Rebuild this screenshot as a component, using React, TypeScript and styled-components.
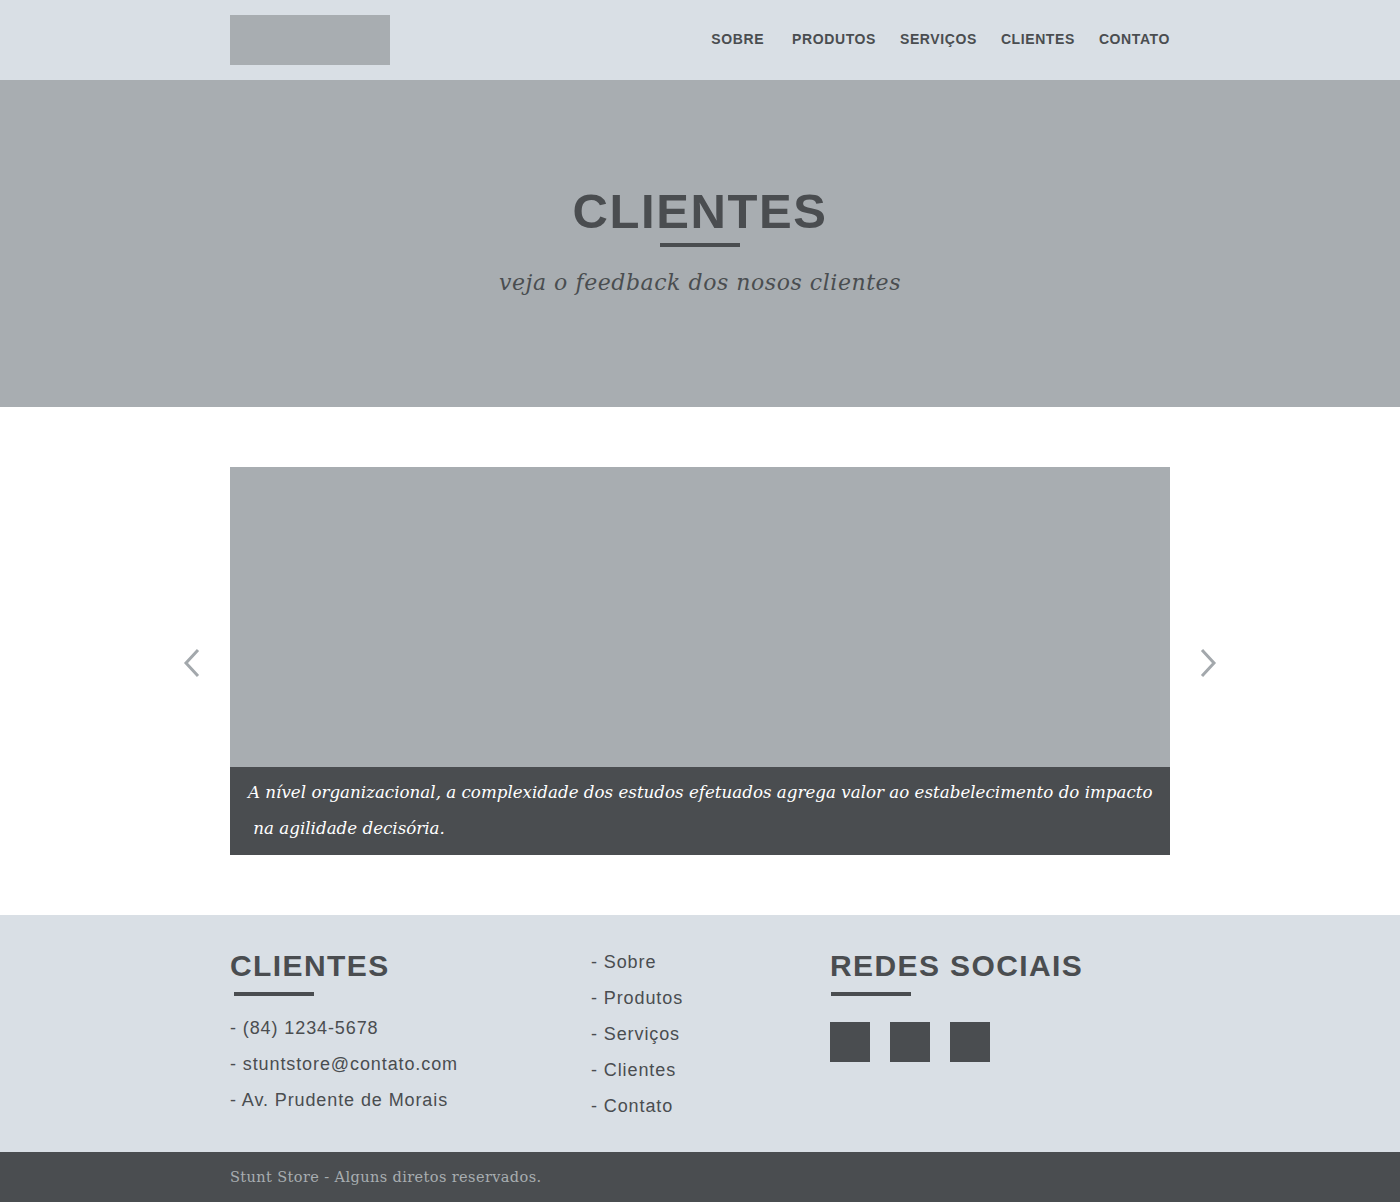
import React from "react";
import styled, { createGlobalStyle } from "styled-components";

const Global = createGlobalStyle`
  html, body { margin: 0; padding: 0; }
  body { background: #ffffff; font-family: "Liberation Sans", Arial, sans-serif; }
  * { box-sizing: border-box; }
`;

const DARK = "#4a4d50";
const GREY = "#a8adb1";
const LIGHT = "#d9dfe5";

const Header = styled.header`
  background: ${LIGHT};
  height: 80px;
`;

const Container = styled.div`
  width: 940px;
  margin: 0 auto;
`;

const HeaderInner = styled(Container)`
  height: 100%;
  display: flex;
  align-items: center;
  justify-content: space-between;
`;

const Logo = styled.div`
  width: 160px;
  height: 50px;
  background: ${GREY};
`;

const Nav = styled.nav`
  display: flex;
  gap: 24px;
  margin-top: -3px;
`;

const NavLink = styled.a<{ $extra?: number }>`
  font-family: "Liberation Sans", Arial, sans-serif;
  font-weight: bold;
  font-size: 14px;
  letter-spacing: 0.6px;
  color: ${DARK};
  text-decoration: none;
  margin-right: ${(p) => p.$extra ?? 0}px;
`;

const Hero = styled.section`
  background: ${GREY};
  height: 327px;
  display: flex;
  flex-direction: column;
  align-items: center;
  padding-top: 104px;
`;

const HeroTitle = styled.h1`
  margin: 0;
  font-family: "Liberation Sans", Arial, sans-serif;
  font-weight: bold;
  font-size: 49px;
  line-height: 54px;
  letter-spacing: 1.6px;
  color: ${DARK};
`;

const Bar = styled.div<{ $offset?: number }>`
  width: 80px;
  height: 4px;
  background: ${DARK};
  margin-left: ${(p) => p.$offset ?? 0}px;
`;

const HeroBar = styled(Bar)`
  margin-top: 5px;
`;

const HeroSub = styled.p`
  margin: 23px 0 0;
  font-family: "DejaVu Serif", Georgia, serif;
  font-style: italic;
  font-size: 22px;
  letter-spacing: 0.55px;
  color: ${DARK};
`;

const Main = styled.main`
  padding: 60px 0;
  display: flex;
  justify-content: center;
  align-items: center;
  gap: 28px;
`;

const ArrowButton = styled.button`
  width: 20px;
  height: 40px;
  padding: 0;
  border: 0;
  background: none;
  display: flex;
  align-items: center;
  justify-content: center;
  cursor: pointer;
  margin-top: 4px;
`;

const Slide = styled.div`
  width: 940px;
  display: flex;
  flex-direction: column;
`;

const SlideImage = styled.div`
  height: 300px;
  background: ${GREY};
`;

const Caption = styled.p`
  margin: 0;
  background: ${DARK};
  color: #ffffff;
  height: 88px;
  padding: 7px 10px 0 18px;
  font-family: "DejaVu Serif", Georgia, serif;
  font-style: italic;
  font-size: 16.7px;
  line-height: 36px;
  white-space: pre-wrap;
`;

const Footer = styled.footer`
  background: ${LIGHT};
  height: 237px;
`;

const FooterInner = styled(Container)`
  display: grid;
  grid-template-columns: 361px 239px 1fr;
  padding-top: 34px;
`;

const Column = styled.div`
  display: flex;
  flex-direction: column;
`;

const FooterTitle = styled.h3`
  margin: 0;
  font-family: "Liberation Sans", Arial, sans-serif;
  font-weight: bold;
  font-size: 30px;
  line-height: 34px;
  letter-spacing: 1.4px;
  color: ${DARK};
`;

const FooterBar = styled(Bar)`
  margin-top: 9px;
`;

const List = styled.ul<{ $top: number }>`
  list-style: none;
  margin: ${(p) => p.$top}px 0 0;
  padding: 0;
`;

const Item = styled.li`
  font-family: "Liberation Sans", Arial, sans-serif;
  font-size: 18px;
  line-height: 36px;
  letter-spacing: 0.9px;
  color: ${DARK};
`;

const Socials = styled.div`
  display: flex;
  gap: 20px;
  margin-top: 26px;
`;

const Square = styled.div`
  width: 40px;
  height: 40px;
  background: ${DARK};
`;

const Bottom = styled.div`
  background: ${DARK};
  height: 50px;
`;

const BottomInner = styled(Container)`
  height: 100%;
  display: flex;
  align-items: center;
  font-family: "DejaVu Serif", Georgia, serif;
  font-size: 14.5px;
  letter-spacing: 0.4px;
  color: ${GREY};
`;

const Chevron = ({ dir }: { dir: "left" | "right" }) => (
  <svg width="18" height="30" viewBox="0 0 18 30">
    <polyline
      points={dir === "left" ? "15,2 3,15 15,28" : "3,2 15,15 3,28"}
      fill="none"
      stroke="#a3a8ac"
      strokeWidth="3"
    />
  </svg>
);

export default function App() {
  return (
    <>
      <Global />
      <Header>
        <HeaderInner>
          <Logo />
          <Nav>
            <NavLink href="#" $extra={4}>SOBRE</NavLink>
            <NavLink href="#">PRODUTOS</NavLink>
            <NavLink href="#">SERVIÇOS</NavLink>
            <NavLink href="#">CLIENTES</NavLink>
            <NavLink href="#">CONTATO</NavLink>
          </Nav>
        </HeaderInner>
      </Header>
      <Hero>
        <HeroTitle>CLIENTES</HeroTitle>
        <HeroBar />
        <HeroSub>veja o feedback dos nosos clientes</HeroSub>
      </Hero>
      <Main>
        <ArrowButton aria-label="anterior">
          <Chevron dir="left" />
        </ArrowButton>
        <Slide>
          <SlideImage />
          <Caption>
            {"A nível organizacional, a complexidade dos estudos efetuados agrega valor ao estabelecimento do impacto\n na agilidade decisória."}
          </Caption>
        </Slide>
        <ArrowButton aria-label="próximo">
          <Chevron dir="right" />
        </ArrowButton>
      </Main>
      <Footer>
        <FooterInner>
          <Column>
            <FooterTitle>CLIENTES</FooterTitle>
            <FooterBar $offset={4} />
            <List $top={14}>
              <Item>- (84) 1234-5678</Item>
              <Item>- stuntstore@contato.com</Item>
              <Item>- Av. Prudente de Morais</Item>
            </List>
          </Column>
          <Column>
            <List $top={-5}>
              <Item>- Sobre</Item>
              <Item>- Produtos</Item>
              <Item>- Serviços</Item>
              <Item>- Clientes</Item>
              <Item>- Contato</Item>
            </List>
          </Column>
          <Column>
            <FooterTitle>REDES SOCIAIS</FooterTitle>
            <FooterBar $offset={1} />
            <Socials>
              <Square />
              <Square />
              <Square />
            </Socials>
          </Column>
        </FooterInner>
      </Footer>
      <Bottom>
        <BottomInner>Stunt Store - Alguns diretos reservados.</BottomInner>
      </Bottom>
    </>
  );
}
